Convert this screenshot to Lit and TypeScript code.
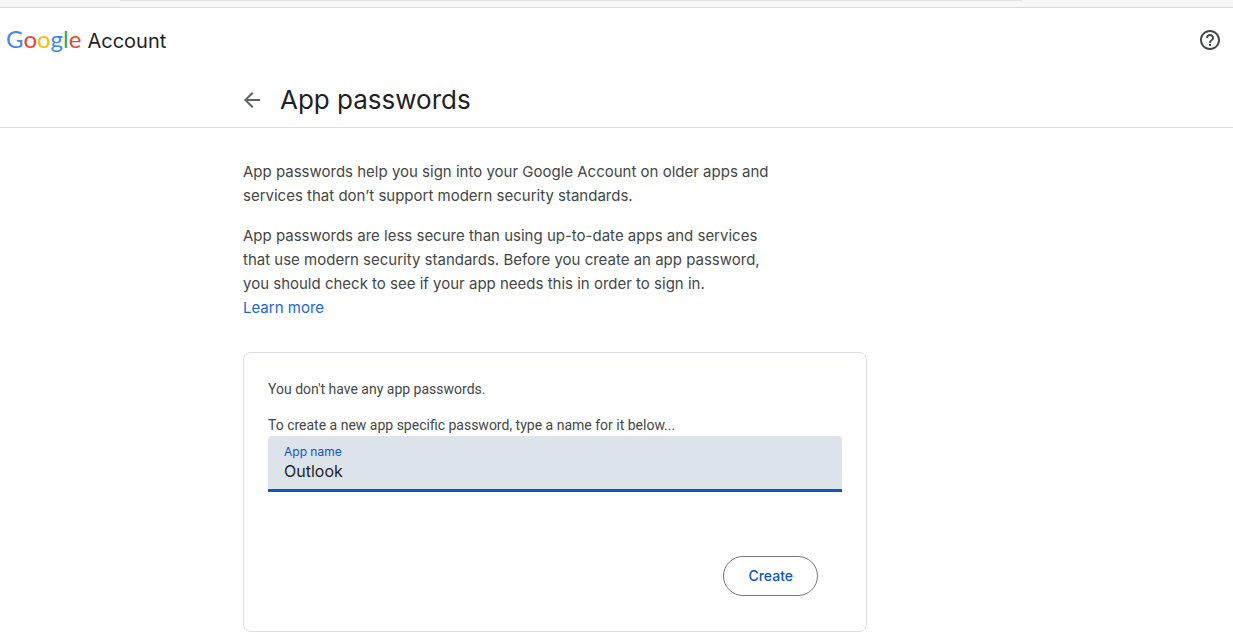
import { LitElement, html, css } from "lit";
import { customElement, state } from "lit/decorators.js";

@customElement("app-root")
export class AppRoot extends LitElement {
  @state() private appName = "Outlook";

  static styles = css`
    :host {
      display: block;
      min-height: 100vh;
      background: #fff;
      color: #444746;
      font-family: "Inter", "Roboto", sans-serif;
    }
    * { box-sizing: border-box; }
    .chrome {
      display: flex;
      height: 8px;
      padding: 0 211px 0 120px;
      background: #f9f7f9;
      border-bottom: 1px solid #dcdadc;
    }
    .chrome-field {
      flex: 1;
      height: 1px;
      background: #e4e1e4;
    }
    .bar {
      display: flex;
      align-items: center;
      justify-content: space-between;
      height: 64px;
      padding: 0 11px 0 6px;
    }
    .brand {
      display: flex;
      align-items: baseline;
      gap: 6px;
      color: #1f1f1f;
      font-size: 20px;
      line-height: 28px;
      text-decoration: none;
    }
    .logo { font-family: "Lato", sans-serif; font-size: 24px; }
    .blue { color: #4285f4; }
    .red { color: #ea4335; }
    .yellow { color: #fbbc05; }
    .green { color: #34a853; }
    .icon-button {
      display: flex;
      padding: 0;
      border: 0;
      background: none;
      color: #444746;
      cursor: pointer;
    }
    .icon-button svg { display: block; fill: currentColor; }
    .back { color: #5f6368; }
    .heading { border-bottom: 1px solid #dadce0; }
    .column {
      max-width: 747px;
      margin: 0 auto;
    }
    .title-row {
      display: flex;
      align-items: center;
      gap: 16px;
      height: 55px;
    }
    .back svg { margin-left: -3px; }
    h1 {
      margin: 0;
      color: #1f1f1f;
      font-size: 26px;
      line-height: 36px;
      font-weight: 400;
    }
    .intro {
      max-width: 540px;
      padding-top: 32px;
      font-size: 15px;
      line-height: 24px;
    }
    .intro p { margin: 0 0 16px; }
    .learn {
      display: block;
      width: fit-content;
      color: #1967d2;
      text-decoration: none;
    }
    .card {
      max-width: 624px;
      margin-top: 32px;
      padding: 25px 24px 35px;
      border: 1px solid #dadce0;
      border-radius: 8px;
      font-family: "Roboto", sans-serif;
      font-size: 14px;
      line-height: 22px;
    }
    .card p { margin: 0 0 14px; }
    .card .prompt { margin: 0; }
    .field {
      display: block;
      height: 56px;
      padding: 8px 16px 0;
      border-bottom: 3px solid #0f56bd;
      border-radius: 4px 4px 0 0;
      background: #dde3ea;
    }
    .field span {
      display: block;
      color: #0f56bd;
      font-family: "Inter", sans-serif;
      font-size: 12px;
      line-height: 16px;
    }
    .field input {
      display: block;
      width: 100%;
      height: 22px;
      padding: 0;
      border: 0;
      outline: 0;
      background: none;
      color: #1f1f1f;
      font: 400 16px/22px "Inter", sans-serif;
    }
    .actions {
      display: flex;
      justify-content: flex-end;
      padding: 64px 24px 0;
    }
    .create {
      height: 40px;
      padding: 0 24px;
      border: 1px solid #747775;
      border-radius: 20px;
      background: #fff;
      color: #0f56bd;
      font: 500 14px/20px "Inter", sans-serif;
      cursor: pointer;
    }
  `;

  render() {
    return html`
      <div class="chrome"><div class="chrome-field"></div></div>
      <header class="bar">
        <a class="brand" href="#">
          <span class="logo"><span class="blue">G</span><span class="red">o</span><span class="yellow">o</span><span class="blue">g</span><span class="green">l</span><span class="red">e</span></span>
          <span>Account</span>
        </a>
        <button class="icon-button" aria-label="Help">
          <svg width="24" height="24" viewBox="0 0 24 24"><path d="M11 18h2v-2h-2v2zm1-16C6.480 2 2 6.480 2 12s4.480 10 10 10 10-4.480 10-10S17.520 2 12 2zm0 18c-4.410 0-8-3.590-8-8s3.590-8 8-8 8 3.590 8 8-3.590 8-8 8zm0-14c-2.210 0-4 1.790-4 4h2c0-1.100.9-2 2-2s2 .9 2 2c0 2-3 1.750-3 5h2c0-2.250 3-2.500 3-5 0-2.210-1.790-4-4-4z"/></svg>
        </button>
      </header>
      <div class="heading">
        <div class="column title-row">
          <button class="icon-button back" aria-label="Back">
            <svg width="24" height="24" viewBox="0 0 24 24"><path d="M20 11H7.830l5.590-5.590L12 4l-8 8 8 8 1.410-1.410L7.830 13H20v-2z"/></svg>
          </button>
          <h1>App passwords</h1>
        </div>
      </div>
      <main class="column">
        <section class="intro">
          <p>App passwords help you sign into your Google Account on older apps and services that don’t support modern security standards.</p>
          <p>App passwords are less secure than using up-to-date apps and services that use modern security standards. Before you create an app password, you should check to see if your app needs this in order to sign in. <a class="learn" href="#">Learn more</a></p>
        </section>
        <section class="card">
          <p>You don't have any app passwords.</p>
          <p class="prompt">To create a new app specific password, type a name for it below...</p>
          <label class="field">
            <span>App name</span>
            <input type="text" .value=${this.appName}
              @input=${(e: Event) => (this.appName = (e.target as HTMLInputElement).value)} />
          </label>
          <div class="actions"><button class="create">Create</button></div>
        </section>
      </main>
    `;
  }
}
